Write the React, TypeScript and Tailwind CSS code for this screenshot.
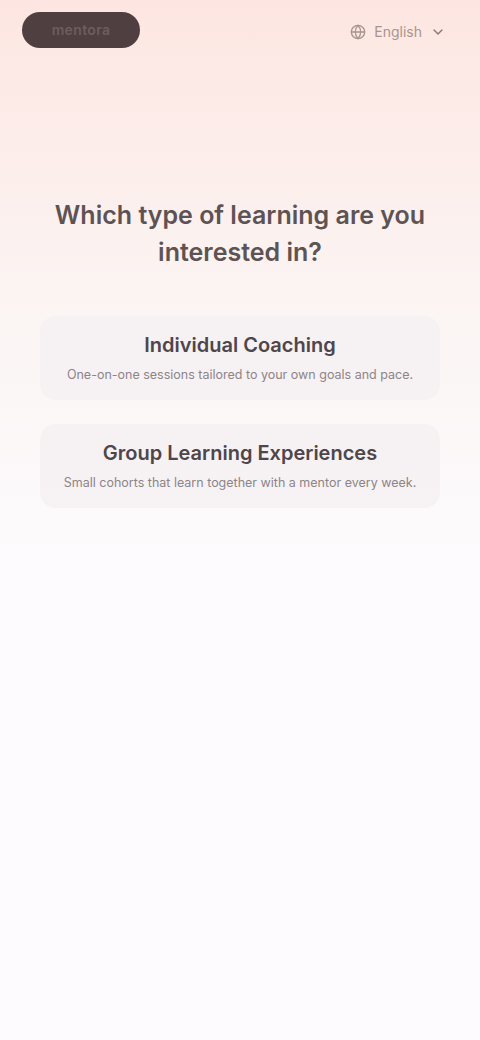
import { ChevronDown, Globe } from 'lucide-react';

const options = [
  {
    title: 'Individual Coaching',
    text: 'One-on-one sessions tailored to your own goals and pace.',
  },
  {
    title: 'Group Learning Experiences',
    text: 'Small cohorts that learn together with a mentor every week.',
  },
];

function App() {
  return (
    <div
      className="w-[480px] min-h-[1040px] bg-gradient-to-b from-[#fde6e1] via-[#fbf5f4] via-30% to-[#fdfbfd] to-55% text-[#2a2224] flex flex-col"
      style={{ fontFamily: 'Inter, "Noto Sans", sans-serif' }}
    >
      <header className="flex items-start justify-between px-[22px] pt-3">
        <div className="h-9 w-[118px] rounded-full bg-[#4f3f41] flex items-center justify-center text-[#6e5c5e] text-sm font-semibold tracking-wide">
          mentora
        </div>
        <div className="flex items-center gap-2 text-[#a8958f] text-sm pr-3 pt-[10px]">
          <Globe className="w-4 h-4" />
          <span>English</span>
          <ChevronDown className="w-4 h-4 text-[#8a7472]" />
        </div>
      </header>

      <main className="flex flex-col items-center px-10 pt-[149px]">
        <h1 className="text-center text-[25px] leading-[37px] font-semibold text-[#5e5354] whitespace-nowrap">
          Which type of learning are you
          <br />
          interested in?
        </h1>

        <div className="w-full flex flex-col gap-[24px] mt-[45px]">
          {options.map((o) => (
            <button
              key={o.title}
              className="w-full rounded-2xl bg-[#f3eff1]/70 px-1 py-4 flex flex-col items-center gap-2"
            >
              <span className="text-[20px] leading-[26px] font-semibold text-[#4e464a] whitespace-nowrap">{o.title}</span>
              <span className="text-[12.5px] leading-[18px] text-[#8d8488] whitespace-nowrap">{o.text}</span>
            </button>
          ))}
        </div>
      </main>
    </div>
  );
}

export default App;
